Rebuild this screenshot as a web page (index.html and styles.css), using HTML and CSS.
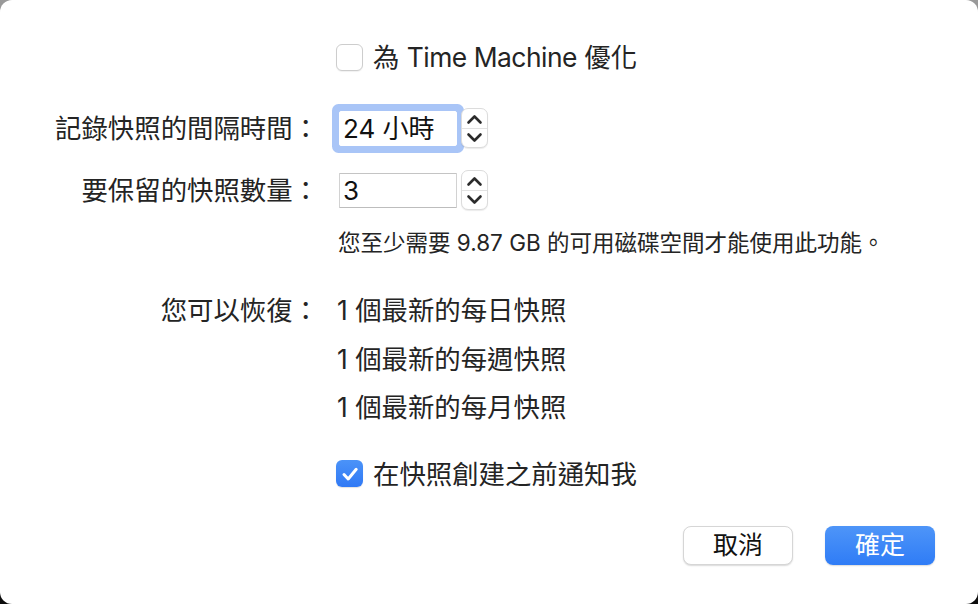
FILE: index.html
```html
<!DOCTYPE html>
<html lang="zh-Hant">
<head>
<meta charset="utf-8">
<title>Time Machine 快照</title>
<link rel="stylesheet" href="styles.css">
</head>
<body>
<div class="dialog">
  <div class="row row-tm">
    <span></span>
    <div class="check">
      <span class="box"></span>
      <span class="check-text">為 <span class="latin">Time Machine</span> 優化</span>
    </div>
  </div>

  <div class="row row-interval">
    <span class="label">記錄快照的間隔時間：</span>
    <div class="spin">
      <div class="field focus">24 小時</div>
      <div class="stepper">
        <svg width="27" height="40" viewBox="0 0 27 40">
          <path d="M7.5 14.5 L13.5 8.5 L19.5 14.5" fill="none" stroke="#2b2b2b" stroke-width="2.6" stroke-linecap="round" stroke-linejoin="round"/>
          <line x1="1" y1="20.5" x2="26" y2="20.5" stroke="#e2e2e2" stroke-width="1"/>
          <path d="M7.5 26.5 L13.5 32.5 L19.5 26.5" fill="none" stroke="#2b2b2b" stroke-width="2.6" stroke-linecap="round" stroke-linejoin="round"/>
        </svg>
      </div>
    </div>
  </div>

  <div class="row row-count">
    <span class="label">要保留的快照數量：</span>
    <div class="spin">
      <div class="field">3</div>
      <div class="stepper">
        <svg width="27" height="40" viewBox="0 0 27 40">
          <path d="M7.5 14.5 L13.5 8.5 L19.5 14.5" fill="none" stroke="#2b2b2b" stroke-width="2.6" stroke-linecap="round" stroke-linejoin="round"/>
          <line x1="1" y1="20.5" x2="26" y2="20.5" stroke="#e2e2e2" stroke-width="1"/>
          <path d="M7.5 26.5 L13.5 32.5 L19.5 26.5" fill="none" stroke="#2b2b2b" stroke-width="2.6" stroke-linecap="round" stroke-linejoin="round"/>
        </svg>
      </div>
    </div>
  </div>

  <div class="row row-note">
    <span></span>
    <span class="note">您至少需要 9.87 GB 的可用磁碟空間才能使用此功能。</span>
  </div>

  <div class="row row-restore">
    <span class="label label-top">您可以恢復：</span>
    <div class="restore-list">
      <div>1 個最新的每日快照</div>
      <div>1 個最新的每週快照</div>
      <div>1 個最新的每月快照</div>
    </div>
  </div>

  <div class="row row-notify">
    <span></span>
    <div class="check">
      <span class="box checked">
        <svg width="26" height="26" viewBox="0 0 26 26">
          <path d="M7 13.5 L11.2 18 L19.2 8.3" fill="none" stroke="#ffffff" stroke-width="3" stroke-linecap="round" stroke-linejoin="round"/>
        </svg>
      </span>
      <span class="check-text">在快照創建之前通知我</span>
    </div>
  </div>

  <div class="buttons">
    <button class="btn">取消</button>
    <button class="btn primary">確定</button>
  </div>
</div>
</body>
</html>
```

FILE: styles.css
```css
* {
  box-sizing: border-box;
}

html, body {
  margin: 0;
  padding: 0;
  width: 978px;
  height: 604px;
  overflow: hidden;
}

body {
  background: linear-gradient(to bottom, #9a9a9a 0%, #555 50%, #0c0c0c 100%);
  font-family: "Inter", "Noto Sans CJK TC", sans-serif;
  color: #242424;
}

.dialog {
  width: 978px;
  height: 604px;
  background: #ffffff;
  border-radius: 12px;
  padding-top: 42px;
  display: flex;
  flex-direction: column;
}

.row {
  display: grid;
  grid-template-columns: 319px 1fr;
  column-gap: 17px;
  align-items: center;
  font-size: 26.4px;
  line-height: 30px;
}

.label {
  text-align: right;
  white-space: nowrap;
}

.row-tm {
  height: 28px;
}

.row-interval {
  height: 50px;
  margin-top: 33px;
}

.row-count {
  height: 40px;
  margin-top: 17px;
}

.row-note {
  height: 30px;
  margin-top: 18px;
}

.row-restore {
  margin-top: 28px;
  align-items: start;
}

.row-notify {
  height: 30px;
  margin-top: 27px;
}

.check {
  display: flex;
  align-items: center;
  gap: 10px;
  white-space: nowrap;
}

.latin {
  letter-spacing: -0.5px;
}

.box {
  width: 27px;
  height: 27px;
  border-radius: 6px;
  border: 1px solid #cdcdcd;
  background: #ffffff;
  box-shadow: 0 1px 1px rgba(0, 0, 0, 0.06);
  display: flex;
  align-items: center;
  justify-content: center;
}

.box.checked {
  border: none;
  background: linear-gradient(to bottom, #4b93f8, #3079f5);
  box-shadow: 0 1px 1px rgba(0, 0, 0, 0.12);
}

.spin {
  display: flex;
  align-items: center;
  gap: 4px;
  margin-left: 3px;
}

.field {
  width: 118px;
  height: 35px;
  border: 1px solid #d2d2d2;
  border-top-color: #c4c4c4;
  border-bottom-color: #bdbdbd;
  border-radius: 1px;
  background: #ffffff;
  color: #111111;
  font-size: 26px;
  line-height: 33px;
  padding-left: 3px;
  white-space: nowrap;
}

.field.focus {
  border-color: #ffffff;
  box-shadow: 0 0 0 7px #a9c5f7;
  border-radius: 2px;
}

.stepper {
  width: 27px;
  height: 40px;
  border-radius: 7px;
  background: #ffffff;
  border: 1px solid #dcdcdc;
  box-shadow: 0 1px 1px rgba(0, 0, 0, 0.08);
  display: flex;
  overflow: hidden;
}

.stepper svg {
  margin: -1px;
}

.note {
  font-size: 22.5px;
  line-height: 30px;
  margin-left: 2px;
  white-space: nowrap;
}

.label-top {
  line-height: 48.5px;
}

.restore-list {
  line-height: 48.5px;
  margin-left: 1px;
}

.buttons {
  display: flex;
  justify-content: flex-end;
  gap: 32px;
  margin-top: 37px;
  padding-right: 43px;
}

.btn {
  width: 110px;
  height: 39px;
  border-radius: 8px;
  border: 1px solid #d6d6d6;
  background: #ffffff;
  box-shadow: 0 1px 1.5px rgba(0, 0, 0, 0.15);
  font-family: "Inter", "Noto Sans CJK TC", sans-serif;
  font-size: 25px;
  line-height: 37px;
  color: #111111;
  padding: 0;
}

.btn.primary {
  border: none;
  background: linear-gradient(to bottom, #4e95f8, #2f7cf6);
  color: #ffffff;
  box-shadow: 0 1px 1.5px rgba(0, 0, 0, 0.15);
}
```
